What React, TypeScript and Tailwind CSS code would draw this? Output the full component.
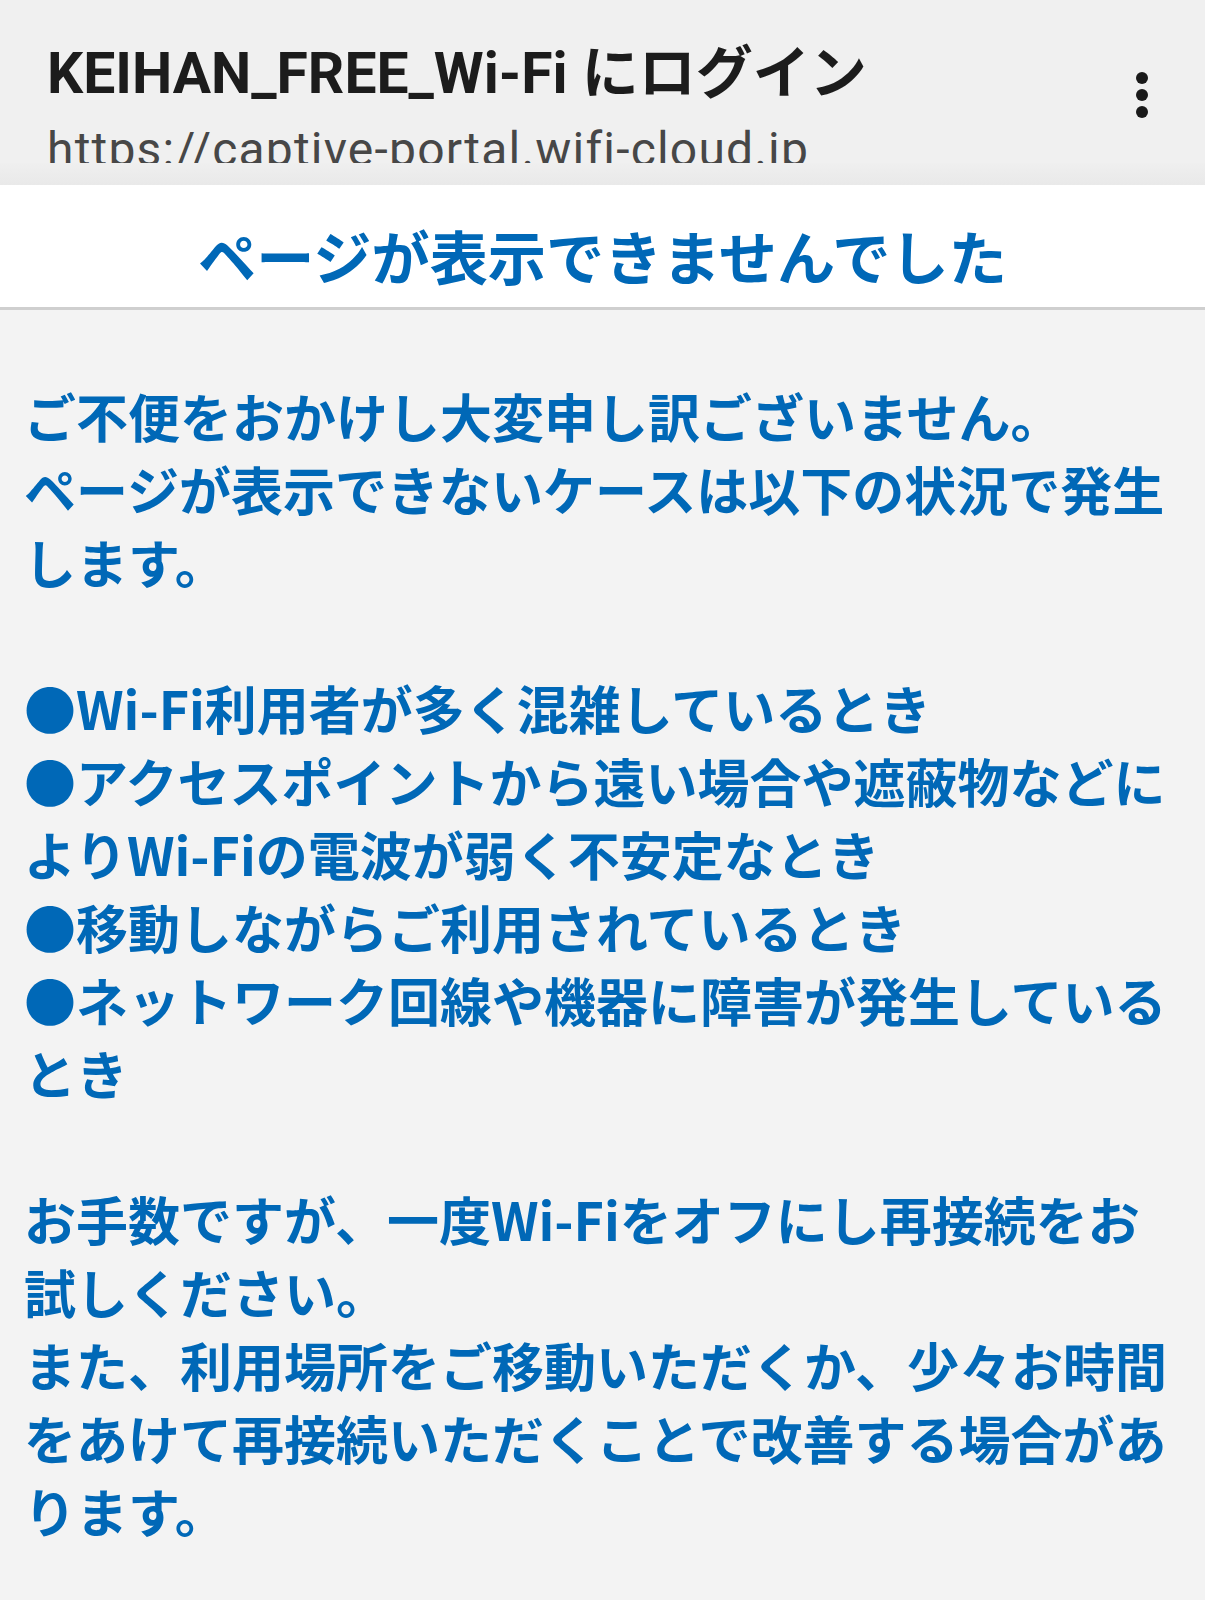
import React from "react";

const BLUE = "text-[#0068b7]";

export default function App() {
    return (
        <div className="min-h-screen w-full bg-[#f3f3f3] font-['Noto_Sans_CJK_JP',sans-serif]">
            <header className="flex flex-col bg-[#f0f0f0]">
                <div className="flex items-start">
                    <div className="min-w-0 flex-1 pl-[47px]">
                        <div className="h-[102px] pt-[40px]">
                            <h1 className="whitespace-nowrap font-['Roboto','Noto_Sans_CJK_JP',sans-serif] text-[57px] font-bold leading-[57px] text-[#1c1c1c]">
                                KEIHAN_FREE_Wi-Fi <span className="font-['Noto_Sans_CJK_JP',sans-serif]">にログイン</span>
                            </h1>
                        </div>
                        <div className="h-[61px] overflow-hidden pt-[24px]">
                            <p className="whitespace-nowrap font-['Roboto',sans-serif] text-[48px] leading-[48px] tracking-[1.2px] text-[#474747]">https://captive-portal.wifi-cloud.jp</p>
                        </div>
                    </div>
                    <div className="mr-[57px] mt-[72px] flex flex-col gap-[5px]" aria-label="More options">
                        <span className="h-[12px] w-[12px] rounded-full bg-[#1a1a1a]" />
                        <span className="h-[12px] w-[12px] rounded-full bg-[#1a1a1a]" />
                        <span className="h-[12px] w-[12px] rounded-full bg-[#1a1a1a]" />
                    </div>
                </div>
                <div className="h-[22px] bg-gradient-to-b from-[#efefef] to-[#e9e9e9]" />
            </header>

            <div className="h-[125px] border-b-[3px] border-[#cfcfcf] bg-white pt-[27px]">
                <h2 className={`text-center text-[58.2px] font-bold leading-[86px] ${BLUE}`}>ページが表示できませんでした</h2>
            </div>

            <main className="pb-[50px] pl-[24px] pr-[33px] pt-[69px]">
                <p className={`text-[52px] font-bold leading-[73px] ${BLUE}`}>
                    ご不便をおかけし大変申し訳ございません。
                    <br />
                    ページが表示できないケースは以下の状況で発生します。
                    <br />
                    <br />
                    ●Wi-Fi利用者が多く混雑しているとき
                    <br />
                    ●アクセスポイントから遠い場合や遮蔽物などによりWi-Fiの電波が弱く不安定なとき
                    <br />
                    ●移動しながらご利用されているとき
                    <br />
                    ●ネットワーク回線や機器に障害が発生しているとき
                    <br />
                    <br />
                    お手数ですが、一度Wi-Fiをオフにし再接続をお試しください。
                    <br />
                    また、利用場所をご移動いただくか、少々お時間をあけて再接続いただくことで改善する場合があります。
                </p>
            </main>
        </div>
    );
}
